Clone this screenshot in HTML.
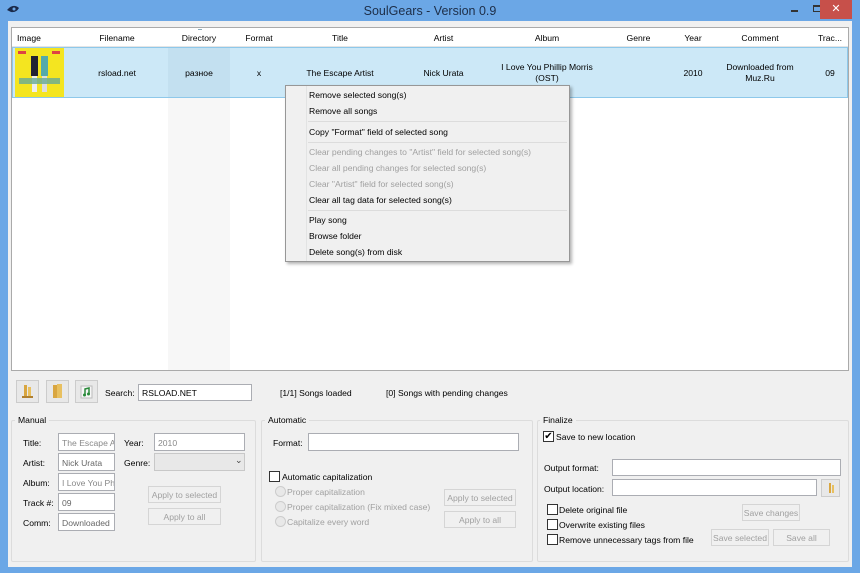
<!DOCTYPE html>
<html><head><meta charset="utf-8"><style>
*{box-sizing:border-box;margin:0;padding:0}
body{width:860px;height:573px;overflow:hidden;background:#6ba7e6;font-family:"Liberation Sans",sans-serif;font-size:8.6px;color:#000;position:relative}
.a{position:absolute}
.c{position:absolute;text-align:center;white-space:nowrap}
.win{left:8px;top:21px;width:844px;height:546px;background:#f0f0f0}
.tb{background:#fff;border:1px solid #abadb3;height:20px;padding:4px 3px;white-space:nowrap;overflow:hidden}
.btn{border:1px solid #d5d5d5;background:#f0f0f0;color:#a0a0a0;text-align:center;padding-top:3px;white-space:nowrap}
.grp{border:1px solid #dcdcdc;border-radius:2px}
.gl{background:#f0f0f0;padding:0 3px}
.cb{width:11px;height:11px;border:1px solid #333;background:#fff}
.rd{width:11px;height:11px;border:1px solid #ccc;border-radius:50%;background:#e8e8e8}
.dis{color:#a0a0a0}
.mi{position:absolute;left:23px;white-space:nowrap}
.sep{position:absolute;left:22px;right:2px;height:1px;background:#dcdcdc}
</style></head><body>
<svg class="a" style="left:6px;top:4px" width="14" height="10"><path d="M1 6 Q7 -1 13 4 Q10 9 5 8 Z" fill="#1a2a4a"/><circle cx="8" cy="5" r="1.5" fill="#6ba7e6"/></svg>
<div class="c" style="left:0;width:860px;top:4px;font-size:12.5px;color:#1d2e48">SoulGears - Version 0.9</div>
<div class="a" style="left:791px;top:10px;width:7px;height:2px;background:#333"></div>
<div class="a" style="left:813px;top:5px;width:8px;height:7px;border:1px solid #333;border-top-width:2px"></div>
<div class="a" style="left:820px;top:0;width:32px;height:19px;background:#c7504a;color:#fff;text-align:center;font-size:11px;line-height:18px">✕</div>
<div class="a win"></div>
<!-- list -->
<div class="a" style="left:11px;top:27px;width:838px;height:344px;background:#fff;border:1px solid #aaa"></div>
<div class="a" style="left:168px;top:47px;width:62px;height:323px;background:#f7f7f7"></div>
<div class="a" style="left:12px;top:28px;width:836px;height:19px;border-bottom:1px solid #e5e5e5"></div>
<div class="a" style="left:12px;top:47px;width:836px;height:51px;background:#cce8f7;border:1px solid #8ec8ea"></div>
<div class="a" style="left:168px;top:48px;width:62px;height:49px;background:#c3e0f0"></div>
<div class="a" style="left:198px;top:29px;width:4px;height:1px;background:#8ab"></div>
<div class="a" style="left:17px;top:33px">Image</div>
<div class="c" style="left:66px;width:102px;top:33px">Filename</div>
<div class="c" style="left:168px;width:62px;top:33px">Directory</div>
<div class="c" style="left:230px;width:58px;top:33px">Format</div>
<div class="c" style="left:288px;width:104px;top:33px">Title</div>
<div class="c" style="left:392px;width:103px;top:33px">Artist</div>
<div class="c" style="left:495px;width:104px;top:33px">Album</div>
<div class="c" style="left:600px;width:77px;top:33px">Genre</div>
<div class="c" style="left:677px;width:32px;top:33px">Year</div>
<div class="c" style="left:709px;width:102px;top:33px">Comment</div>
<div class="c" style="left:811px;width:38px;top:33px">Trac...</div>
<svg class="a" style="left:15px;top:48px" width="49" height="49"><rect width="49" height="49" fill="#f4e520"/><rect x="16" y="8" width="7" height="20" fill="#223"/><rect x="26" y="8" width="7" height="20" fill="#5aa"/><rect x="17" y="28" width="5" height="16" fill="#eee"/><rect x="27" y="28" width="5" height="16" fill="#ddd"/><rect x="4" y="30" width="41" height="6" fill="#6a9" opacity=".8"/><rect x="3" y="3" width="8" height="3" fill="#d44"/><rect x="37" y="3" width="8" height="3" fill="#d44"/></svg>
<div class="c" style="left:66px;width:102px;top:68px">rsload.net</div>
<div class="c" style="left:168px;width:62px;top:68px">разное</div>
<div class="c" style="left:230px;width:58px;top:68px">x</div>
<div class="c" style="left:288px;width:104px;top:68px">The Escape Artist</div>
<div class="c" style="left:392px;width:103px;top:68px">Nick Urata</div>
<div class="c" style="left:495px;width:104px;top:62px;line-height:11px">I Love You Phillip Morris<br>(OST)</div>
<div class="c" style="left:677px;width:32px;top:68px">2010</div>
<div class="c" style="left:709px;width:102px;top:62px;line-height:11px">Downloaded from<br>Muz.Ru</div>
<div class="c" style="left:811px;width:38px;top:68px">09</div>
<!-- menu -->
<div class="a" style="left:285px;top:85px;width:285px;height:177px;background:#f0f0f0;border:1px solid #979797;box-shadow:2px 2px 3px rgba(0,0,0,.3)">
<div class="a" style="left:20px;top:0;width:1px;height:175px;background:#e2e3e3"></div>
<div class="mi" style="top:4px">Remove selected song(s)</div>
<div class="mi" style="top:20px">Remove all songs</div>
<div class="sep" style="top:35px"></div>
<div class="mi" style="top:41px">Copy "Format" field of selected song</div>
<div class="sep" style="top:56px"></div>
<div class="mi dis" style="top:61px">Clear pending changes to "Artist" field for selected song(s)</div>
<div class="mi dis" style="top:77px">Clear all pending changes for selected song(s)</div>
<div class="mi dis" style="top:93px">Clear "Artist" field for selected song(s)</div>
<div class="mi" style="top:109px">Clear all tag data for selected song(s)</div>
<div class="sep" style="top:124px"></div>
<div class="mi" style="top:129px">Play song</div>
<div class="mi" style="top:145px">Browse folder</div>
<div class="mi" style="top:161px">Delete song(s) from disk</div>
</div>
<!-- toolbar -->
<div class="a" style="left:16px;top:380px;width:23px;height:23px;border:1px solid #ccc;background:#e8e8e8"><svg width="21" height="21"><rect x="7" y="4" width="3" height="13" fill="#d9a640"/><rect x="11" y="6" width="3" height="11" fill="#e8c060"/><rect x="5" y="15" width="11" height="2" fill="#b08030"/></svg></div>
<div class="a" style="left:46px;top:380px;width:23px;height:23px;border:1px solid #ccc;background:#e8e8e8"><svg width="21" height="21"><rect x="6" y="4" width="4" height="13" fill="#d9a640"/><rect x="10" y="3" width="5" height="14" fill="#e8c060"/></svg></div>
<div class="a" style="left:75px;top:380px;width:23px;height:23px;border:1px solid #ccc;background:#e8e8e8"><svg width="21" height="21"><rect x="5" y="5" width="11" height="12" fill="#f6f6f6" stroke="#bbb"/><path d="M9 14 V8 L13 7 V13" stroke="#2a8a3a" stroke-width="1.5" fill="none"/><circle cx="8.5" cy="14" r="1.5" fill="#2a8a3a"/><circle cx="12.5" cy="13" r="1.5" fill="#2a8a3a"/></svg></div>
<div class="a" style="left:105px;top:388px">Search:</div>
<div class="a tb" style="left:138px;top:384px;width:114px;height:17px;padding-top:3px">RSLOAD.NET</div>
<div class="a" style="left:280px;top:388px">[1/1] Songs loaded</div>
<div class="a" style="left:386px;top:388px">[0] Songs with pending changes</div>
<!-- Manual -->
<div class="a grp" style="left:11px;top:420px;width:245px;height:142px"></div>
<div class="a gl" style="left:15px;top:415px">Manual</div>
<div class="a" style="left:23px;top:438px">Title:</div>
<div class="a" style="left:23px;top:458px">Artist:</div>
<div class="a" style="left:23px;top:478px">Album:</div>
<div class="a" style="left:23px;top:498px">Track #:</div>
<div class="a" style="left:23px;top:518px">Comm:</div>
<div class="a tb" style="left:58px;top:433px;width:57px;height:18px;color:#888">The Escape A</div>
<div class="a tb" style="left:58px;top:453px;width:57px;height:18px;color:#666">Nick Urata</div>
<div class="a tb" style="left:58px;top:473px;width:57px;height:18px;color:#888">I Love You Ph</div>
<div class="a tb" style="left:58px;top:493px;width:57px;height:18px;color:#666">09</div>
<div class="a tb" style="left:58px;top:513px;width:57px;height:18px;color:#666">Downloaded</div>
<div class="a" style="left:124px;top:438px">Year:</div>
<div class="a" style="left:124px;top:458px">Genre:</div>
<div class="a tb" style="left:154px;top:433px;width:91px;height:18px;color:#888">2010</div>
<div class="a tb" style="left:154px;top:453px;width:91px;height:18px;background:#e8e8e8;border-color:#c8c8c8"></div>
<div class="a" style="left:235px;top:455px;font-size:9px;color:#444">⌄</div>
<div class="a btn" style="left:148px;top:486px;width:73px;height:17px">Apply to selected</div>
<div class="a btn" style="left:148px;top:508px;width:73px;height:17px">Apply to all</div>
<!-- Automatic -->
<div class="a grp" style="left:261px;top:420px;width:272px;height:142px"></div>
<div class="a gl" style="left:265px;top:415px">Automatic</div>
<div class="a" style="left:273px;top:438px">Format:</div>
<div class="a tb" style="left:308px;top:433px;width:211px;height:18px"></div>
<div class="a cb" style="left:269px;top:471px"></div>
<div class="a" style="left:282px;top:472px">Automatic capitalization</div>
<div class="a rd" style="left:275px;top:486px"></div><div class="a dis" style="left:287px;top:487px">Proper capitalization</div>
<div class="a rd" style="left:275px;top:501px"></div><div class="a dis" style="left:287px;top:502px">Proper capitalization (Fix mixed case)</div>
<div class="a rd" style="left:275px;top:516px"></div><div class="a dis" style="left:287px;top:517px">Capitalize every word</div>
<div class="a btn" style="left:444px;top:489px;width:72px;height:17px">Apply to selected</div>
<div class="a btn" style="left:444px;top:511px;width:72px;height:17px">Apply to all</div>
<!-- Finalize -->
<div class="a grp" style="left:537px;top:420px;width:312px;height:142px"></div>
<div class="a gl" style="left:540px;top:415px">Finalize</div>
<div class="a cb" style="left:543px;top:431px;font-size:10px;line-height:9px;text-align:center">✔</div>
<div class="a" style="left:556px;top:432px">Save to new location</div>
<div class="a" style="left:544px;top:463px">Output format:</div>
<div class="a tb" style="left:612px;top:459px;width:229px;height:17px"></div>
<div class="a" style="left:544px;top:484px">Output location:</div>
<div class="a tb" style="left:612px;top:479px;width:205px;height:17px"></div>
<div class="a" style="left:821px;top:479px;width:19px;height:18px;border:1px solid #ccc;background:#e8e8e8"><svg width="17" height="16"><rect x="7" y="3" width="2" height="10" fill="#d9a640"/><rect x="10" y="5" width="2" height="8" fill="#e8c060"/></svg></div>
<div class="a cb" style="left:547px;top:504px"></div><div class="a" style="left:559px;top:505px">Delete original file</div>
<div class="a cb" style="left:547px;top:519px"></div><div class="a" style="left:559px;top:520px">Overwrite existing files</div>
<div class="a cb" style="left:547px;top:534px"></div><div class="a" style="left:559px;top:535px">Remove unnecessary tags from file</div>
<div class="a btn" style="left:742px;top:504px;width:58px;height:17px">Save changes</div>
<div class="a btn" style="left:711px;top:529px;width:58px;height:17px">Save selected</div>
<div class="a btn" style="left:773px;top:529px;width:57px;height:17px">Save all</div>
</body></html>
